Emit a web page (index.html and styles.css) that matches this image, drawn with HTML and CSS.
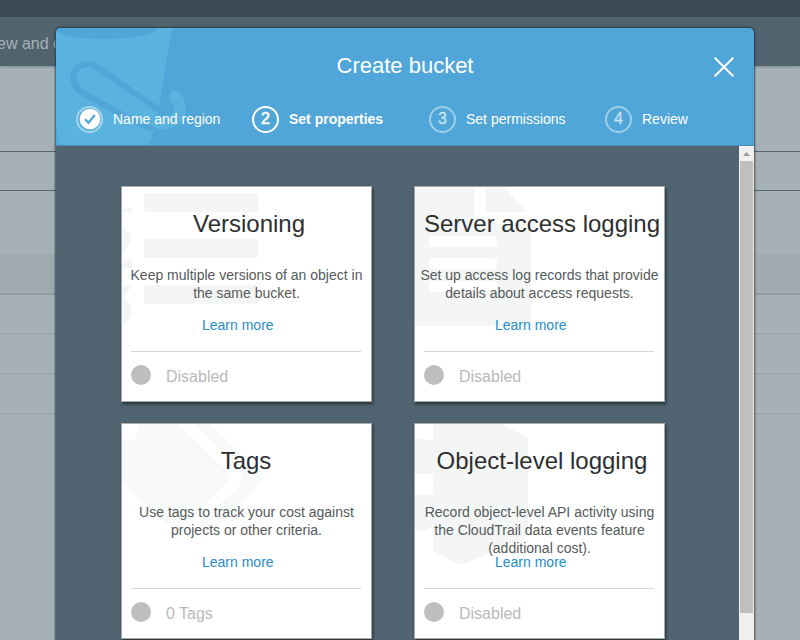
FILE: index.html
```
<!DOCTYPE html>
<html lang="en">
<head>
<meta charset="utf-8">
<title>Create bucket</title>
<link rel="stylesheet" href="styles.css">
</head>
<body>
<div class="page">
  <div class="navbar"></div>
  <div class="banner">ew and c</div>
  <div class="toolbar"></div>
  <div class="filter"></div>
  <div class="spacer"></div>
  <div class="table-head"></div>
  <div class="table-row"></div>
  <div class="table-row"></div>
  <div class="table-row"></div>
</div>
<section class="modal">
  <header class="modal-header">
    <svg class="bucket" width="140" height="118" viewBox="0 0 140 118">
      <path class="bucket-light" d="M0 0H116L103 80L97 104C96 111 94 115 92 118H5C2 114 2 110 1 103L0 98Z"/>
      <ellipse class="bucket-dark" cx="50" cy="1" rx="50" ry="10"/>
      <path class="bucket-hook" d="M119 69C125 75 126 85 119 91C113 96 105 97 96 93"/>
      <path class="bucket-line" d="M97 101Q86 98 74 91L27 65C18 59 15 50 19 43C24 35 34 35 42 40L97 78C107 85 115 83 115 75"/>
    </svg>
    <h1 class="modal-title">Create bucket</h1>
    <svg class="close" width="20" height="20" viewBox="0 0 20 20"><path d="M.7.7 19.300 19.300M19.300.7.7 19.300"/></svg>
    <nav class="steps">
      <div class="step step-done"><span class="badge"><svg width="22" height="22" viewBox="0 0 22 22"><circle cx="11" cy="11" r="10.300"/><path d="M6 11.200 9.500 14.800 15.800 7"/></svg></span><span class="label">Name and region</span></div>
      <div class="step step-current"><span class="badge">2</span><span class="label">Set properties</span></div>
      <div class="step step-third"><span class="badge">3</span><span class="label">Set permissions</span></div>
      <div class="step step-last"><span class="badge">4</span><span class="label">Review</span></div>
    </nav>
  </header>
  <div class="modal-body">
    <main class="cards">
      <article class="card">
        <svg class="art" width="249" height="214" viewBox="0 0 249 214">
          <g><rect x="22" y="6.500" width="114" height="18.500" rx="2"/><rect x="22" y="52" width="114" height="19" rx="2"/><rect x="22" y="98" width="114" height="19" rx="2"/><path d="M0 21H10V25H0ZM0 41C5 42 9 46 9 52C9 58 5 62 0 64ZM0 81V77L2 72H10V82ZM0 98H10L4 108 1 111 3 113C13 116 12 134 0 138V113L1 111 0 109Z"/></g>
        </svg>
        <h2 class="card-title shifted">Versioning</h2>
        <p class="description">Keep multiple versions of an object in<br>the same bucket.</p>
        <a class="learn">Learn more</a>
        <div class="status"><i class="dot"></i><span>Disabled</span></div>
      </article>
      <article class="card">
        <svg class="art" width="249" height="214" viewBox="0 0 249 214">
          <path fill-rule="evenodd" d="M0 0H59V37H116V139H0ZM71 0H89L112 25H71ZM17 49H79Q82 49 82 52V57Q82 60 79 60H17Q14 60 14 57V52Q14 49 17 49ZM17 71H79Q82 71 82 74V79Q82 82 79 82H17Q14 82 14 79V74Q14 71 17 71ZM17 94H79Q82 94 82 97V102Q82 105 79 105H17Q14 105 14 102V97Q14 94 17 94Z"/>
        </svg>
        <h2 class="card-title shifted">Server access logging</h2>
        <p class="description">Set up access log records that provide<br>details about access requests.</p>
        <a class="learn">Learn more</a>
        <div class="status"><i class="dot"></i><span>Disabled</span></div>
      </article>
      <article class="card">
        <svg class="art art-faint" width="249" height="214" viewBox="0 0 249 214">
          <path d="M16 0H57L104 46Q110 53 104 60L66 98Q59 105 51 103L45 101 0 58V16C10 20 20 10 16 0ZM73 0H89L136 47Q142 54 136 62L95 103Q90 108 83 105L76 100 115 64Q124 55 116 46Z"/>
        </svg>
        <h2 class="card-title tags-title">Tags</h2>
        <p class="description">Use tags to track your cost against<br>projects or other criteria.</p>
        <a class="learn">Learn more</a>
        <div class="status"><i class="dot"></i><span>0 Tags</span></div>
      </article>
      <article class="card">
        <svg class="art" width="249" height="214" viewBox="0 0 249 214">
          <path d="M18 0H87L113 14V107Q113 110 109 113L54 138Q46 142 39 138L18 127V104L5 108 0 105V71H18V50H0V15H5L18 17Z"/>
        </svg>
        <h2 class="card-title shifted">Object-level logging</h2>
        <p class="description">Record object-level API activity using<br>the CloudTrail data events feature<br>(additional cost).</p>
        <a class="learn">Learn more</a>
        <div class="status"><i class="dot"></i><span>Disabled</span></div>
      </article>
    </main>
    <div class="scrollbar">
      <div class="scroll-up"><svg width="7" height="4" viewBox="0 0 7 4"><path d="M3.500 0 7 4H0Z"/></svg></div>
      <div class="thumb"></div>
    </div>
  </div>
</section>
</body>
</html>
```
FILE: styles.css
```
* { box-sizing: border-box; }
body {
  margin: 0;
  width: 800px;
  height: 640px;
  overflow: hidden;
  position: relative;
  font-family: "Liberation Sans", Arial, sans-serif;
  background: #a6b1b7;
}
h1, h2, p { margin: 0; font-weight: 400; }
.navbar { height: 17px; background: #3d4b58; }
.banner {
  height: 49px;
  background: #506470;
  color: #a6b1b7;
  font-size: 16px;
  line-height: 53px;
  text-indent: -3px;
  box-shadow: 0 1px 2px rgba(60, 80, 90, .4);
}
.toolbar { height: 86px; border-bottom: 1px solid #55656e; }
.filter { height: 39px; border-bottom: 1px solid #55656e; }
.spacer { height: 63px; }
.table-head { height: 41px; background: #a0abb0; border-bottom: 2px solid #909ca2; }
.table-row { height: 40px; border-bottom: 2px solid #9ba7ad; }

.modal {
  position: absolute;
  left: 56px;
  top: 28px;
  width: 698px;
  height: 612px;
  display: flex;
  flex-direction: column;
  border-radius: 5px 5px 0 0;
  background: #506571;
  box-shadow: 0 0 2px 1px rgba(35, 45, 50, .75);
}
.modal-header {
  position: relative;
  height: 118px;
  flex: none;
  overflow: hidden;
  border-radius: 5px 5px 0 0;
  border-bottom: 1px solid #4b8db4;
  background: #50a6d8;
  color: #fff;
}
.bucket { position: absolute; left: 0; top: 0; }
.bucket-light { fill: #5ab2df; }
.bucket-dark { fill: #50a6d8; }
.bucket-line { fill: none; stroke: #50a6d8; stroke-width: 6; }
.bucket-hook { fill: none; stroke: #5ab2df; stroke-width: 12; stroke-linecap: round; }
.modal-title {
  position: relative;
  padding-top: 25px;
  text-align: center;
  font-size: 22px;
  line-height: 25px;
}
.close { position: absolute; right: 20px; top: 29px; }
.close path { stroke: #fff; stroke-width: 2; }
.steps { position: relative; display: flex; padding: 27px 0 0 20px; }
.step { display: flex; align-items: center; height: 28px; font-size: 14px; }
.step-done { width: 176px; }
.step-current { width: 177px; }
.step-third { width: 176px; }
.badge {
  width: 27px;
  height: 27px;
  margin-right: 10px;
  display: flex;
  align-items: center;
  justify-content: center;
  border: 2px solid rgba(255, 255, 255, .45);
  border-radius: 50%;
  color: rgba(255, 255, 255, .65);
  font-size: 16px;
  -webkit-text-stroke: .3px rgba(255, 255, 255, .6);
}
.step-current .badge {
  border: 2px solid #fff;
  color: #fff;
  -webkit-text-stroke: .6px #fff;
}
.step-current .label { font-weight: 700; }
.badge circle { fill: #fff; }
.badge path { fill: none; stroke: #50a6d8; stroke-width: 2.300; }

.modal-body { flex: 1; display: flex; overflow: hidden; }
.cards {
  width: 683px;
  padding: 40px 0 0 65px;
  display: grid;
  grid-template-columns: 251px 251px;
  grid-auto-rows: 216px;
  gap: 21px 42px;
}
.card {
  position: relative;
  border: 1px solid #aaa;
  background: #fff;
  box-shadow: 1px 2px 3px rgba(20, 28, 32, .75);
}
.art { position: absolute; left: 0; top: 0; fill: #f4f6f6; }
.art-faint { fill: #f8faf9; }
.card-title, .description, .learn, .status { position: relative; }
.card-title {
  height: 79px;
  padding-top: 23px;
  text-align: center;
  white-space: nowrap;
  font-size: 24px;
  line-height: 28px;
  color: #2d2f30;
}
.shifted { padding-left: 5px; }
.tags-title { padding-right: 1px; }
.description {
  height: 50px;
  text-align: center;
  white-space: nowrap;
  font-size: 14px;
  line-height: 18px;
  color: #555a5a;
}
.learn {
  display: block;
  margin-left: 80px;
  font-size: 14px;
  line-height: 18px;
  color: #2a8dcb;
}
.status {
  display: flex;
  align-items: center;
  gap: 15px;
  height: 50px;
  margin: 17px 10px 0 9px;
  border-top: 1px solid #d5d8d8;
  color: #b8baba;
  font-size: 16px;
}
.dot { width: 20px; height: 20px; margin-bottom: 3px; border-radius: 50%; background: #bcbfbe; }
.scrollbar { width: 15px; background: #eff1f1; }
.scroll-up { height: 15px; display: flex; align-items: center; justify-content: center; }
.scroll-up svg { fill: #999c9c; }
.thumb { width: 13px; height: 452px; margin-left: 1px; background: #bdc0bf; }
```
